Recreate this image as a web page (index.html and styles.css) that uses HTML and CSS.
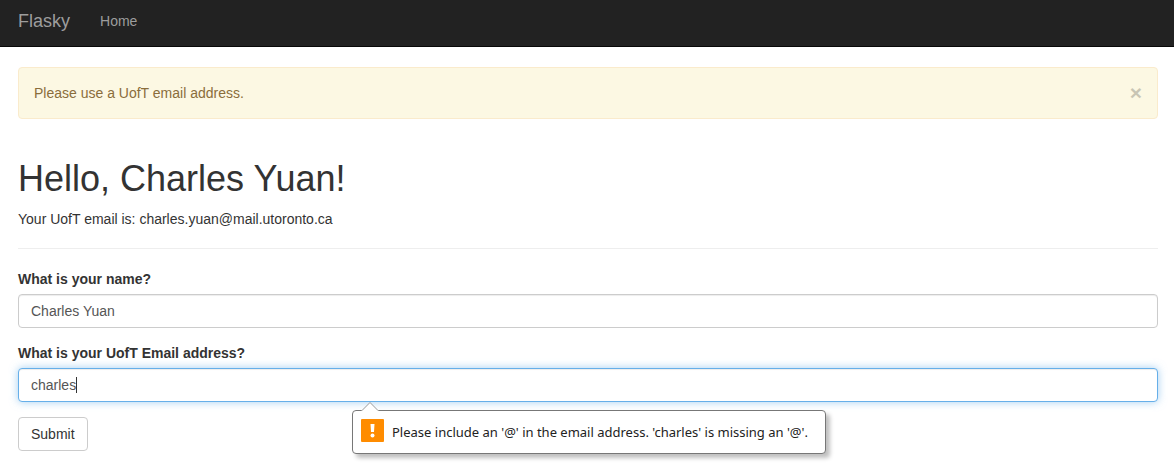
FILE: index.html
```html
<!DOCTYPE html>
<html lang="en">
<head>
<meta charset="utf-8">
<meta name="viewport" content="width=device-width, initial-scale=1">
<title>Flasky</title>
<link rel="stylesheet" href="styles.css">
</head>
<body>
<nav class="navbar">
  <a class="navbar-brand" href="#">Flasky</a>
  <a class="navbar-link" href="#">Home</a>
</nav>
<main class="container">
  <div class="alert" role="alert">
    <span>Please use a UofT email address.</span>
    <button class="close" type="button" aria-label="Close">×</button>
  </div>
  <header class="page-header">
    <h1 class="title">Hello, Charles Yuan!</h1>
    <p class="lead">Your UofT email is: charles.yuan@mail.utoronto.ca</p>
  </header>
  <form class="form" novalidate>
    <div class="form-group">
      <label class="label" for="name">What is your name?</label>
      <input class="form-control" id="name" type="text" value="Charles Yuan">
    </div>
    <div class="form-group">
      <label class="label" for="email">What is your UofT Email address?</label>
      <div class="field">
        <input class="form-control form-control-active" id="email" type="email" value="charles" aria-describedby="email-hint">
        <span class="caret"></span>
        <div class="bubble" id="email-hint" role="tooltip">
          <svg class="bubble-arrow" width="18" height="9" viewBox="0 0 18 9" aria-hidden="true"><path d="M0 9L1 8.500L9 .5L17 8.500L18 9Z" fill="#fff"/><path d="M1 8.500L9 .5L17 8.500" fill="none" stroke="#999"/></svg>
          <svg class="bubble-icon" width="23" height="23" viewBox="0 0 23 23" aria-hidden="true"><rect width="23" height="23" rx="1" fill="#ff8c00"/><path d="M9.500 5H13.500L13 13H10Z" fill="#fff"/><circle cx="11.500" cy="16.500" r="2" fill="#fff"/></svg>
          <span>Please include an '@' in the email address. 'charles' is missing an '@'.</span>
        </div>
      </div>
    </div>
    <button class="btn" type="button">Submit</button>
  </form>
</main>
</body>
</html>
```
FILE: styles.css
```css
* {
  box-sizing: border-box;
}

body {
  margin: 0;
  background: #fff;
  color: #333;
  font: 14px/20px "Liberation Sans", Arial, sans-serif;
}

.navbar {
  display: flex;
  align-items: center;
  gap: 30px;
  padding: 11px 16px 15px 18px;
  background: #222;
  border-bottom: 1px solid #080808;
}

.navbar-brand,
.navbar-link {
  color: #9d9d9d;
  text-decoration: none;
}

.navbar-brand {
  font-size: 18px;
}

.container {
  padding: 20px 16px 20px 18px;
}

.alert {
  display: flex;
  align-items: center;
  justify-content: space-between;
  padding: 15px;
  background: #fcf8e3;
  border: 1px solid #faebcc;
  border-radius: 4px;
  color: #8a6d3b;
}

.close {
  padding: 0;
  border: 0;
  background: none;
  color: #000;
  font: bold 21px/20px "Liberation Sans", Arial, sans-serif;
  opacity: 0.2;
  cursor: pointer;
}

.page-header {
  margin: 40px 0 20px;
  padding-bottom: 19px;
  border-bottom: 1px solid #eee;
}

.title {
  margin: 0 0 10px;
  font-size: 36px;
  font-weight: 500;
  line-height: 40px;
}

.lead {
  margin: 0;
}

.form-group {
  margin-bottom: 15px;
}

.label {
  display: block;
  margin-bottom: 5px;
  font-weight: bold;
}

.field {
  position: relative;
}

.form-control {
  display: block;
  width: 100%;
  height: 34px;
  padding: 6px 12px;
  border: 1px solid #ccc;
  border-radius: 4px;
  outline: 0;
  background: #fff;
  box-shadow: inset 0 1px 1px rgba(0, 0, 0, 0.075);
  color: #555;
  font: inherit;
}

.form-control-active {
  border-color: #66afe9;
  box-shadow: inset 0 1px 1px rgba(0, 0, 0, 0.075), 0 0 8px rgba(102, 175, 233, 0.6);
}

.caret {
  position: absolute;
  top: 9px;
  left: 58px;
  width: 1px;
  height: 16px;
  background: #333;
}

.bubble {
  position: absolute;
  top: 42px;
  left: 334px;
  display: flex;
  align-items: center;
  gap: 8px;
  min-width: 474px;
  height: 44px;
  padding: 0 8px;
  border: 1px solid #777;
  border-radius: 4px;
  background: #fff;
  box-shadow: 4px 4px 4px rgba(0, 0, 0, 0.25);
  color: #222;
  font-family: "Noto Sans", "Open Sans", sans-serif;
  font-size: 13px;
  white-space: nowrap;
}

.bubble-arrow {
  position: absolute;
  top: -9px;
  left: 8px;
}

.bubble-icon {
  margin-top: -4px;
}

.btn {
  padding: 6px 12px;
  border: 1px solid #ccc;
  border-radius: 4px;
  background: #fff;
  color: #333;
  font: inherit;
  cursor: pointer;
}
```
